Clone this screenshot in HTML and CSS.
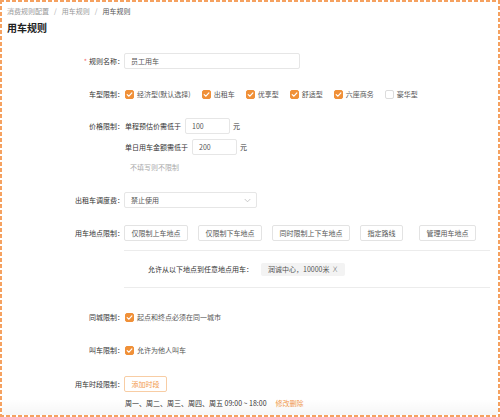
FILE: index.html
```html
<!DOCTYPE html>
<html lang="zh-CN">
<head>
<meta charset="utf-8">
<title>用车规则</title>
<link rel="stylesheet" href="styles.css">
</head>
<body>
<div class="page">
  <div class="crumb"><span class="c-link">消费规则配置</span><span class="sep">/</span><span class="c-link">用车规则</span><span class="sep">/</span><span class="c-cur">用车规则</span></div>
  <h1 class="title">用车规则</h1>

  <div class="row r-name">
    <div class="label"><span class="req">*</span>规则名称：</div>
    <div class="input w-name">员工用车</div>
  </div>

  <div class="row r-type">
    <div class="label">车型限制：</div>
    <div class="checks">
      <span class="chk"><span class="box on"><svg viewBox="0 0 9 9"><path d="M2.2 4.6 L3.9 6.2 L6.9 2.9" /></svg></span>经济型(默认选择)</span>
      <span class="chk"><span class="box on"><svg viewBox="0 0 9 9"><path d="M2.2 4.6 L3.9 6.2 L6.9 2.9" /></svg></span>出租车</span>
      <span class="chk"><span class="box on"><svg viewBox="0 0 9 9"><path d="M2.2 4.6 L3.9 6.2 L6.9 2.9" /></svg></span>优享型</span>
      <span class="chk"><span class="box on"><svg viewBox="0 0 9 9"><path d="M2.2 4.6 L3.9 6.2 L6.9 2.9" /></svg></span>舒适型</span>
      <span class="chk"><span class="box on"><svg viewBox="0 0 9 9"><path d="M2.2 4.6 L3.9 6.2 L6.9 2.9" /></svg></span>六座商务</span>
      <span class="chk"><span class="box"></span>豪华型</span>
    </div>
  </div>

  <div class="row r-price">
    <div class="label">价格限制：</div>
    <div class="col">
      <div class="sub"><span class="txt">单程预估价需低于</span><span class="input w-num">100</span><span class="unit">元</span></div>
      <div class="sub sub2"><span class="txt">单日用车金额需低于</span><span class="input w-num">200</span><span class="unit">元</span></div>
      <div class="hint">不填写则不限制</div>
    </div>
  </div>

  <div class="row r-taxi">
    <div class="label">出租车调度费：</div>
    <div class="input select">禁止使用<svg class="chev" viewBox="0 0 8 5"><path d="M0.8 0.8 L4 4 L7.2 0.8" /></svg></div>
  </div>

  <div class="row r-loc">
    <div class="label">用车地点限制：</div>
    <div class="btns">
      <span class="btn">仅限制上车地点</span>
      <span class="btn">仅限制下车地点</span>
      <span class="btn">同时限制上下车地点</span>
      <span class="btn">指定路线</span>
      <span class="btn btn-last">管理用车地点</span>
    </div>
  </div>

  <div class="loc-box">
    <span class="loc-text">允许从以下地点到任意地点用车：</span>
    <span class="tag">润诚中心，10000米<span class="x">X</span></span>
  </div>

  <div class="row r-city">
    <div class="label">同城限制：</div>
    <span class="chk"><span class="box on"><svg viewBox="0 0 9 9"><path d="M2.2 4.6 L3.9 6.2 L6.9 2.9" /></svg></span>起点和终点必须在同一城市</span>
  </div>

  <div class="row r-call">
    <div class="label">叫车限制：</div>
    <span class="chk"><span class="box on"><svg viewBox="0 0 9 9"><path d="M2.2 4.6 L3.9 6.2 L6.9 2.9" /></svg></span>允许为他人叫车</span>
  </div>

  <div class="row r-time">
    <div class="label">用车时段限制：</div>
    <span class="btn btn-orange">添加时段</span>
  </div>

  <div class="sched">周一、周二、周三、周四、周五 09:00 ~ 18:00<span class="edit">修改删除</span></div>

  <div class="fade"></div>
</div>
</body>
</html>
```

FILE: styles.css
```css
html, body {
  margin: 0;
  padding: 0;
  background: #ffffff;
}

body {
  font-family: "Noto Sans CJK SC", "Noto Sans", sans-serif;
  font-size: 7px;
  color: #333;
}

.page {
  position: relative;
  width: 500px;
  height: 417px;
  box-sizing: border-box;
  padding: 2px 7px 0 7px;
  overflow: hidden;
  background:
    repeating-linear-gradient(90deg, #f5a160 0 4px, transparent 4px 6px) top left / 100% 2px no-repeat,
    repeating-linear-gradient(90deg, #f5a160 0 4px, transparent 4px 6px) bottom left / 100% 2px no-repeat,
    repeating-linear-gradient(180deg, #f5a160 0 4px, transparent 4px 6px) top left / 2px 100% no-repeat,
    repeating-linear-gradient(180deg, #f5a160 0 4px, transparent 4px 6px) top right / 2px 100% no-repeat,
    #ffffff;
}

.crumb {
  margin-top: 4px;
  line-height: 10px;
  color: #999;
  white-space: nowrap;
}

.sep {
  margin: 0 5px;
  color: #aaa;
}

.c-cur {
  color: #555;
}

.title {
  margin: 5px 0 0 0;
  font-size: 10px;
  line-height: 14px;
  font-weight: bold;
  color: #222;
}

.row {
  display: flex;
  align-items: center;
  height: 16px;
}

.label {
  flex: none;
  width: 117px;
  text-align: right;
  color: #333;
  line-height: 16px;
  white-space: nowrap;
}

.req {
  color: #f56c6c;
  margin-right: 2px;
}

.input {
  box-sizing: border-box;
  height: 16px;
  line-height: 14px;
  border: 1px solid #e6e6e6;
  border-radius: 2px;
  padding: 0 6px;
  color: #555;
  background: #fff;
  white-space: nowrap;
}

.w-name {
  width: 176px;
}

.r-name { margin-top: 18px; }
.r-type { margin-top: 17px; }

.checks {
  display: flex;
  align-items: center;
}

.chk {
  display: inline-flex;
  align-items: center;
  margin-right: 10px;
  color: #555;
  white-space: nowrap;
  line-height: 16px;
}

.box {
  box-sizing: border-box;
  width: 9px;
  height: 9px;
  border-radius: 2px;
  margin: 0 3px 0 1px;
  border: 1px solid #dcdcdc;
  background: #fff;
  display: inline-flex;
}

.box.on {
  border-color: #f09038;
  background: #f09038;
}

.box svg {
  width: 9px;
  height: 9px;
  margin: -1px;
}

.box svg path {
  fill: none;
  stroke: #fff;
  stroke-width: 1.2;
  stroke-linecap: round;
  stroke-linejoin: round;
}

.r-price {
  margin-top: 16px;
  height: auto;
  align-items: flex-start;
}

.col {
  display: flex;
  flex-direction: column;
  padding-left: 1px;
}

.sub {
  display: flex;
  align-items: center;
  height: 16px;
}

.sub2 {
  margin-top: 5px;
}

.txt {
  color: #333;
  margin-right: 4px;
}

.w-num {
  width: 45px;
}

.unit {
  margin-left: 3px;
  color: #333;
}

.hint {
  margin-top: 6px;
  line-height: 12px;
  padding-left: 5px;
  color: #aaa;
}

.r-taxi { margin-top: 19px; }

.select {
  width: 133px;
  height: 16px;
  display: flex;
  align-items: center;
  justify-content: space-between;
}

.chev {
  width: 7px;
  height: 5px;
  margin-right: -1px;
}

.chev path {
  fill: none;
  stroke: #bbb;
  stroke-width: 0.9;
}

.r-loc { margin-top: 17px; }

.btns {
  display: flex;
  align-items: center;
}

.btn {
  box-sizing: border-box;
  height: 16px;
  line-height: 14px;
  padding: 0 6.5px;
  border: 1px solid #e3e3e3;
  border-radius: 2px;
  background: #fff;
  color: #555;
  white-space: nowrap;
  margin-right: 10px;
}

.btn-last {
  margin-left: 6px;
  margin-right: 0;
}

.loc-box {
  margin: 9px 3px 0 117px;
  height: 38px;
  box-sizing: border-box;
  border-top: 1px solid #ececec;
  border-bottom: 1px solid #ececec;
  display: flex;
  align-items: center;
  padding-left: 24px;
}

.loc-text {
  color: #333;
  margin-right: 8px;
}

.tag {
  display: inline-flex;
  align-items: center;
  height: 13px;
  padding: 0 7px;
  background: #f3f3f3;
  border-radius: 2px;
  color: #555;
}

.x {
  margin-left: 3px;
  font-family: "DejaVu Sans", sans-serif;
  font-size: 7.5px;
  font-weight: 300;
  color: #666;
}

.r-city { margin-top: 21px; }
.r-call { margin-top: 17px; }
.r-time { margin-top: 18px; }

.btn-orange {
  border-color: #f8cda4;
  color: #f29a4c;
  margin-right: 0;
}

.sched {
  margin: 5px 0 0 118px;
  line-height: 12px;
  color: #333;
  white-space: nowrap;
}

.edit {
  margin-left: 9px;
  color: #f29a4c;
}

.fade {
  position: absolute;
  left: 2px;
  right: 2px;
  bottom: 2px;
  height: 16px;
  background: linear-gradient(to bottom, rgba(0,0,0,0), rgba(0,0,0,0.035));
  pointer-events: none;
}
```
